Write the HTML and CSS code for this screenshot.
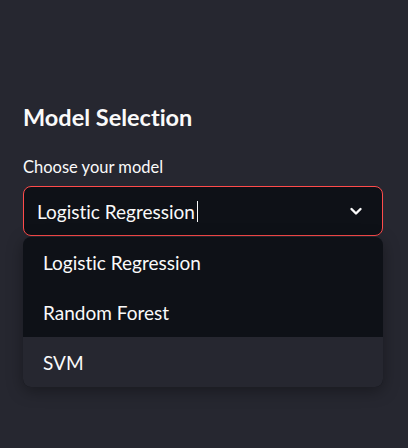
FILE: index.html
```html
<!DOCTYPE html>
<html>
<head>
<meta charset="utf-8">
<link rel="stylesheet" href="styles.css">
</head>
<body>
<main class="panel">
  <h2 class="title">Model Selection</h2>
  <label class="label">Choose your model</label>
  <div class="select">
    <div class="select-value">Logistic Regression<span class="caret"></span></div>
    <svg class="chevron" width="16" height="16" viewBox="0 0 16 16"><path d="M3.5 6 L8 10.5 L12.5 6" fill="none" stroke="#fafafa" stroke-width="2.4" stroke-linecap="round" stroke-linejoin="round"/></svg>
  </div>
  <ul class="menu">
    <li class="option">Logistic Regression</li>
    <li class="option">Random Forest</li>
    <li class="option hover">SVM</li>
  </ul>
</main>
</body>
</html>
```
FILE: styles.css
```css
html, body {
  margin: 0;
  padding: 0;
  background: #262730;
  width: 408px;
  height: 448px;
  overflow: hidden;
}
body {
  font-family: "Lato", "Liberation Sans", sans-serif;
  color: #fafafa;
  font-variant-ligatures: none;
}
.panel {
  padding: 100px 25px 0 23px;
  display: flex;
  flex-direction: column;
}
.title {
  margin: 0;
  font-size: 23.5px;
  font-weight: 700;
  line-height: 34px;
}
.label {
  margin-top: 23px;
  font-size: 16.5px;
  line-height: 20px;
  height: 20px;
}
.select {
  margin-top: 9px;
  height: 50px;
  box-sizing: border-box;
  border: 1px solid #ff4b4b;
  border-radius: 8px;
  background: #0e1117;
  display: flex;
  align-items: center;
  justify-content: space-between;
  padding: 0 18px 0 13px;
}
.select-value {
  font-size: 19px;
  display: flex;
  align-items: center;
}
.caret {
  display: inline-block;
  width: 1px;
  height: 21px;
  background: #fafafa;
  margin-left: 2px;
}
.chevron {
  display: block;
}
.menu {
  list-style: none;
  margin: 1px 0 0;
  padding: 0;
  background: #0e1117;
  border-radius: 8px;
  overflow: hidden;
  box-shadow: 0 4px 16px rgba(0,0,0,0.35);
}
.option {
  height: 50px;
  display: flex;
  align-items: center;
  padding-left: 20px;
  font-size: 19px;
}
.option.hover {
  background: #262730;
}
```
